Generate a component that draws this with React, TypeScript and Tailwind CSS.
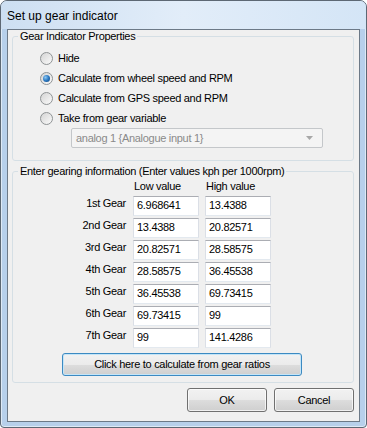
import { useState } from 'react';

const gears = [
  { label: '1st Gear', low: '6.968641', high: '13.4388' },
  { label: '2nd Gear', low: '13.4388', high: '20.82571' },
  { label: '3rd Gear', low: '20.82571', high: '28.58575' },
  { label: '4th Gear', low: '28.58575', high: '36.45538' },
  { label: '5th Gear', low: '36.45538', high: '69.73415' },
  { label: '6th Gear', low: '69.73415', high: '99' },
  { label: '7th Gear', low: '99', high: '141.4286' },
];

const modes = [
  'Hide',
  'Calculate from wheel speed and RPM',
  'Calculate from GPS speed and RPM',
  'Take from gear variable',
];

function Radio({ checked }: { checked: boolean }) {
  return (
    <div className="w-[13px] h-[13px] rounded-full border border-[#8f9395] bg-linear-to-br from-[#d4d4d4] to-[#fbfbfb] flex items-center justify-center shrink-0">
      {checked && (
        <div className="w-[7px] h-[7px] rounded-full bg-radial-[at_35%_35%] from-[#8cc8f4] via-[#2b78c0] to-[#0d3f78]" />
      )}
    </div>
  );
}

function TextBox({ value }: { value: string }) {
  return (
    <div className="w-[66px] h-[20px] bg-white border border-t-[#abadb3] border-x-[#dbdfe6] border-b-[#e3e9ef] px-[3px] leading-[17px]">
      {value}
    </div>
  );
}

const btnFace =
  'bg-[linear-gradient(#f2f2f2_0%,#ebebeb_50%,#dddddd_50%,#cfcfcf_100%)] rounded-[3px] flex items-center justify-center';

export default function App() {
  const [mode, setMode] = useState(1);

  return (
    <div className="w-[367px] h-[428px] font-['Liberation_Sans',Arial,sans-serif] text-[11px] text-black tracking-[-0.3px]">
      <div className="w-full h-full flex flex-col rounded-t-[7px] rounded-b-[4px] border border-[#5d6874] bg-[#b7d0eb] shadow-[inset_0_0_0_1px_rgba(255,255,255,0.55)] overflow-hidden">
        {/* Title bar */}
        <div className="h-[28px] shrink-0 flex items-center pl-[6px] pt-[1px] bg-linear-to-r from-[#cddff2] via-[#e2edf9] to-[#d4e5f6] text-[12px] tracking-normal">
          Set up gear indicator
        </div>

        {/* Client area */}
        <div className="mx-[6px] mb-[5px] flex-1 border border-[#6c7987] bg-[#f0f0f0] flex flex-col">
          <fieldset className="ml-[4px] w-[342px] border border-[#d5dfe5] rounded-[3px]">
            <legend className="ml-[5px] px-[2px] leading-[12px]">Gear Indicator Properties</legend>
            <div className="pt-[6px] pb-[12px]">
              {modes.map((m, i) => (
                <div
                  key={m}
                  className="h-[20px] pl-[27px] flex items-center gap-[5px]"
                  onClick={() => setMode(i)}
                >
                  <Radio checked={mode === i} />
                  <span>{m}</span>
                </div>
              ))}
              <div className="ml-[58px] w-[252px] h-[20px] border border-[#c4c7ca] rounded-[2px] bg-[#f4f4f4] flex items-center justify-between pl-[4px] pr-[9px] text-[#8a8a8a]">
                <span>analog 1 {'{'}Analogue input 1{'}'}</span>
                <svg width="7" height="4" viewBox="0 0 7 4">
                  <path d="M0 0h7L3.5 4z" fill="#a7a7a7" />
                </svg>
              </div>
            </div>
          </fieldset>

          <fieldset className="mt-[4px] ml-[4px] w-[342px] border border-[#d5dfe5] rounded-[3px]">
            <legend className="ml-[5px] px-[2px] leading-[12px]">
              Enter gearing information (Enter values kph per 1000rpm)
            </legend>
            <div className="pb-[6px]">
              <div className="h-[19px] flex items-center">
                <div className="w-[113px]" />
                <div className="ml-[7px] w-[66px] pl-[1px]">Low value</div>
                <div className="ml-[6px] w-[66px] pl-[1px]">High value</div>
              </div>
              <div className="flex flex-col gap-[2px]">
                {gears.map((g) => (
                  <div key={g.label} className="flex items-start h-[20px]">
                    <div className="w-[113px] text-right leading-[15px]">{g.label}</div>
                    <div className="ml-[7px]">
                      <TextBox value={g.low} />
                    </div>
                    <div className="ml-[6px]">
                      <TextBox value={g.high} />
                    </div>
                  </div>
                ))}
              </div>
              <button
                className={`mt-[5px] ml-[49px] w-[240px] h-[23px] border border-[#3c8ac2] shadow-[inset_0_0_0_1px_#c4e5f8] ${btnFace}`}
              >
                Click here to calculate from gear ratios
              </button>
            </div>
          </fieldset>

          <div className="mt-[5px] flex justify-end gap-[7px] pr-[5px]">
            <button className={`w-[80px] h-[24px] border border-[#707070] shadow-[inset_0_0_0_1px_rgba(255,255,255,0.7)] ${btnFace}`}>
              OK
            </button>
            <button className={`w-[80px] h-[24px] border border-[#707070] shadow-[inset_0_0_0_1px_rgba(255,255,255,0.7)] ${btnFace}`}>
              Cancel
            </button>
          </div>
        </div>
      </div>
    </div>
  );
}
